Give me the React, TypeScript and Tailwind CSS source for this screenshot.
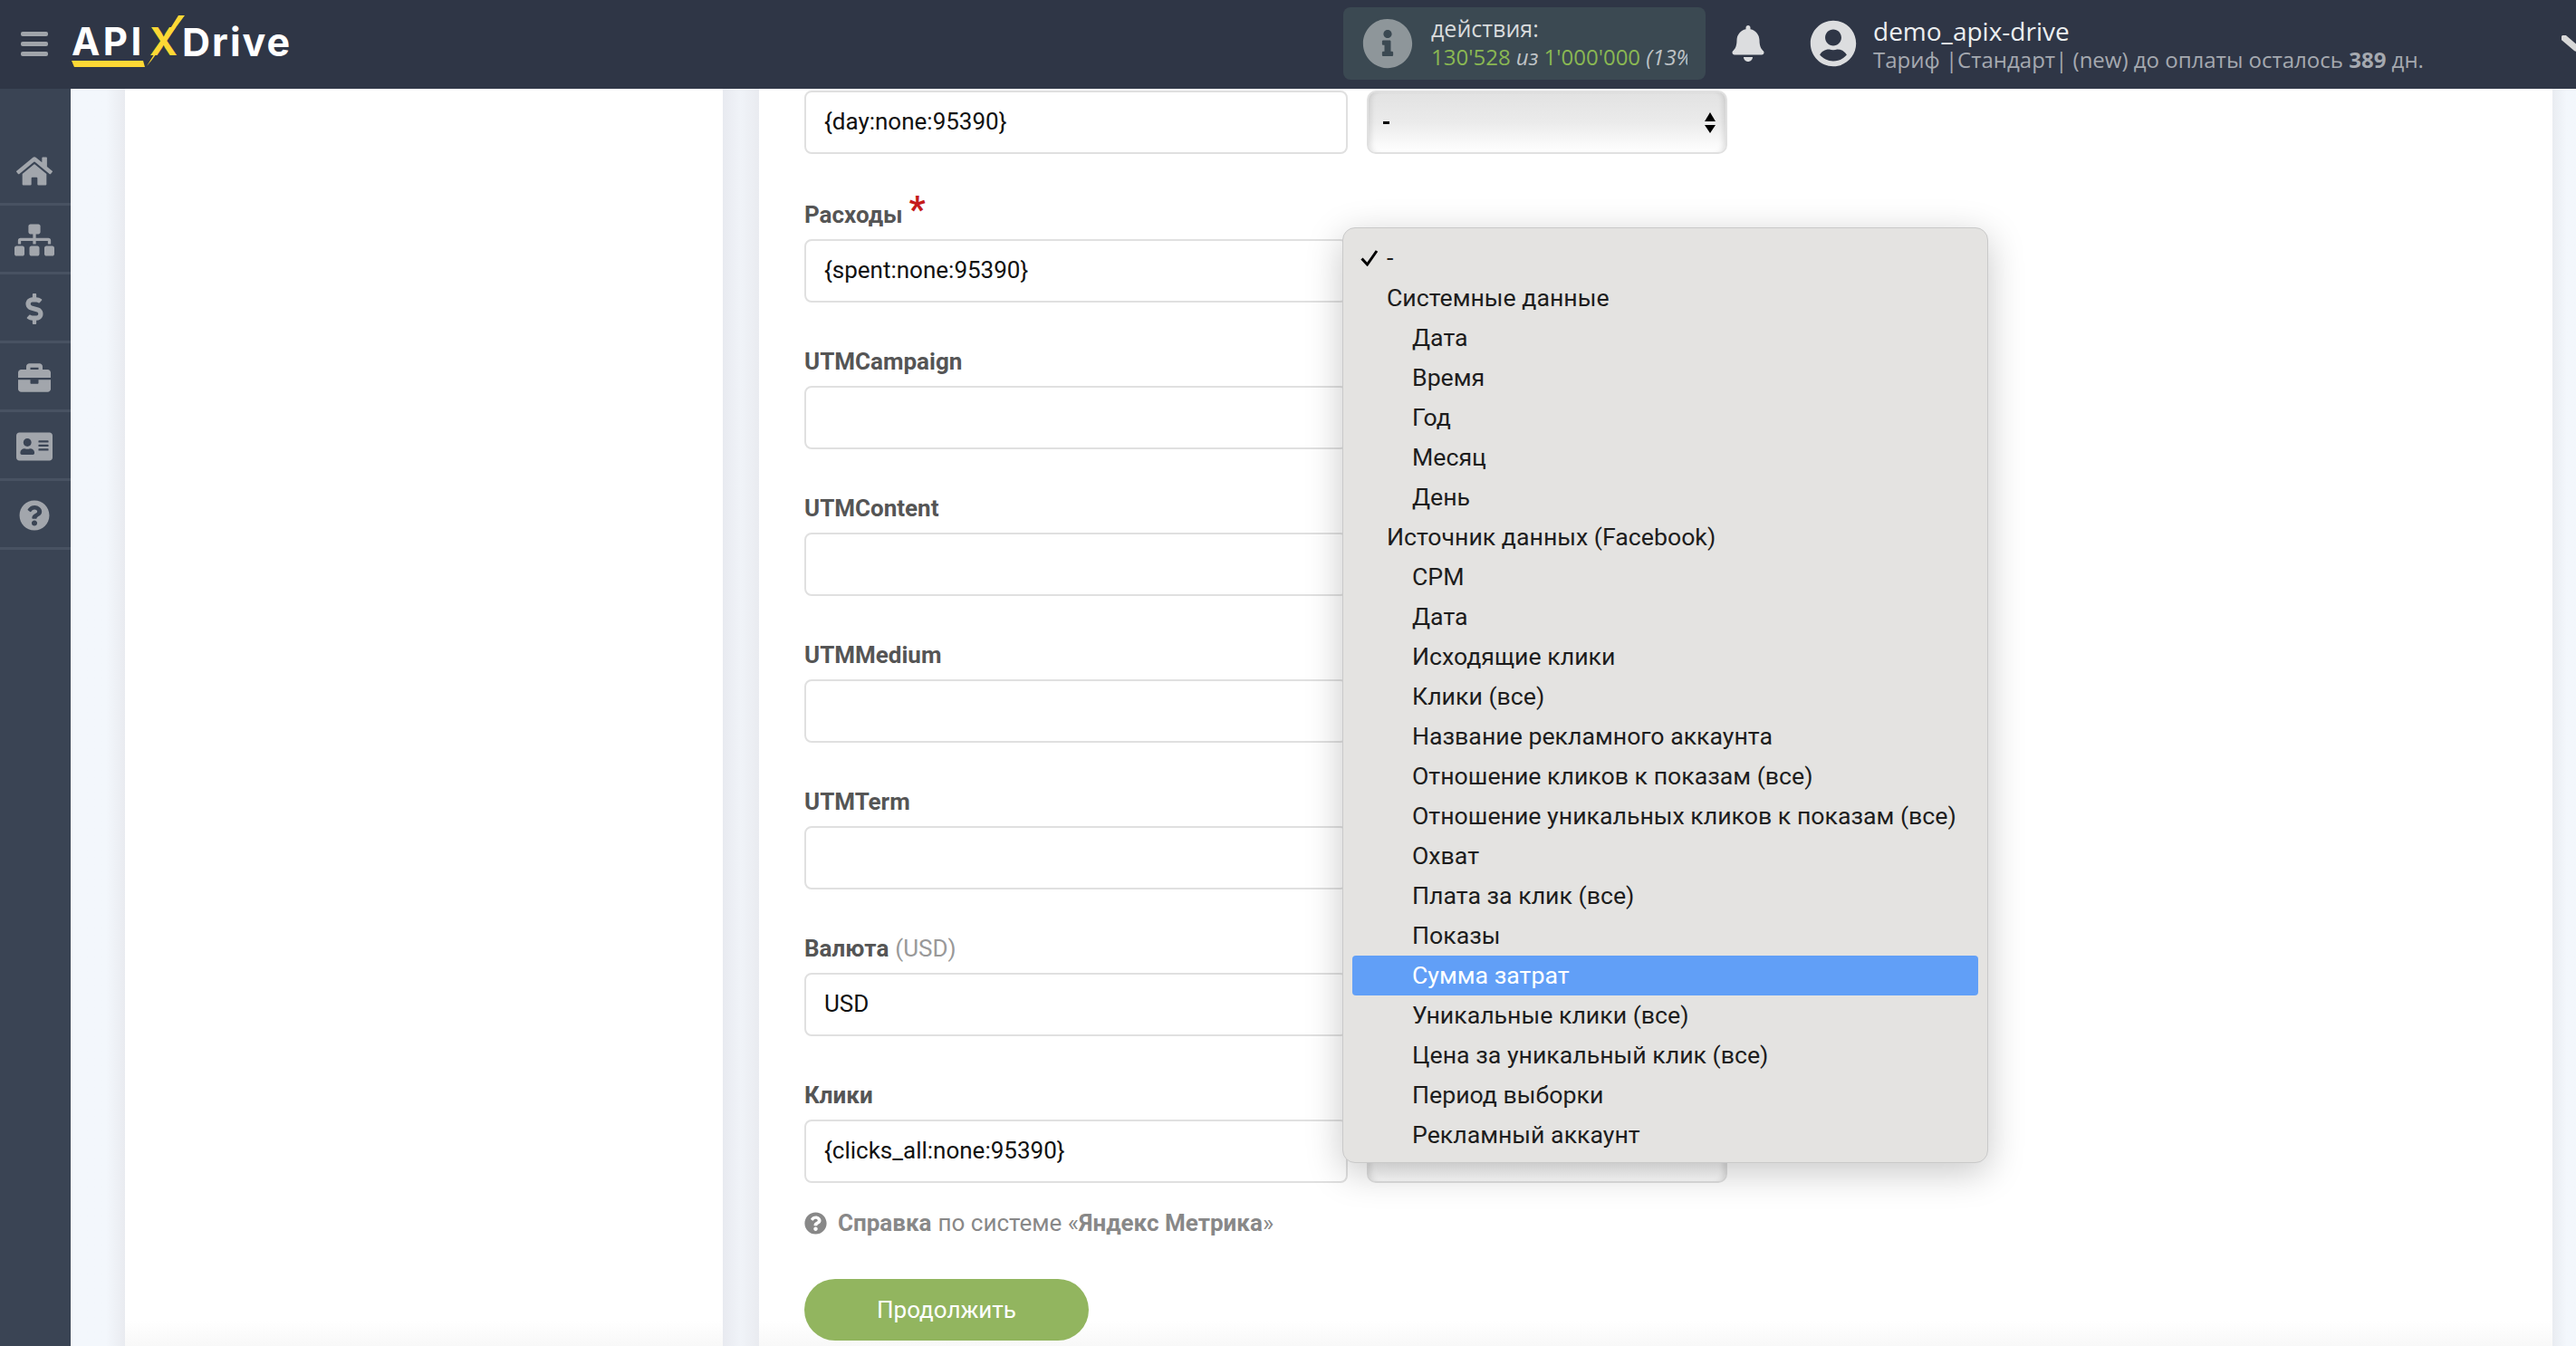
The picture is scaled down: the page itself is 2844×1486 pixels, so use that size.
import React from "react";
import {
  FaAddressCard,
  FaBell,
  FaBriefcase,
  FaDollarSign,
  FaHome,
  FaInfoCircle,
  FaQuestionCircle,
  FaSitemap,
  FaUserCircle,
} from "react-icons/fa";

const navIcons = [
  { Icon: FaHome, size: 40 },
  { Icon: FaSitemap, size: 44 },
  { Icon: FaDollarSign, size: 34 },
  { Icon: FaBriefcase, size: 36 },
  { Icon: FaAddressCard, size: 40 },
  { Icon: FaQuestionCircle, size: 34 },
];

const rows = [
  { label: "UTMCampaign", value: "" },
  { label: "UTMContent", value: "" },
  { label: "UTMMedium", value: "" },
  { label: "UTMTerm", value: "" },
  { label: "Валюта", hint: "(USD)", value: "USD" },
  { label: "Клики", value: "{clicks_all:none:95390}" },
];

const menuItems = [
  { text: "Системные данные", level: 0 },
  { text: "Дата", level: 1 },
  { text: "Время", level: 1 },
  { text: "Год", level: 1 },
  { text: "Месяц", level: 1 },
  { text: "День", level: 1 },
  { text: "Источник данных (Facebook)", level: 0 },
  { text: "CPM", level: 1 },
  { text: "Дата", level: 1 },
  { text: "Исходящие клики", level: 1 },
  { text: "Клики (все)", level: 1 },
  { text: "Название рекламного аккаунта", level: 1 },
  { text: "Отношение кликов к показам (все)", level: 1 },
  { text: "Отношение уникальных кликов к показам (все)", level: 1 },
  { text: "Охват", level: 1 },
  { text: "Плата за клик (все)", level: 1 },
  { text: "Показы", level: 1 },
  { text: "Сумма затрат", level: 1, active: true },
  { text: "Уникальные клики (все)", level: 1 },
  { text: "Цена за уникальный клик (все)", level: 1 },
  { text: "Период выборки", level: 1 },
  { text: "Рекламный аккаунт", level: 1 },
];

// logo: letters stay real text, only the underline and the long stroke of the X are drawn
const Logo = () => (
  <div className="relative mb-[4px] ml-[26px] h-[58px] w-[244px] shrink-0 font-['Inter',sans-serif] text-white">
    <span className="absolute left-0 top-[7px] text-[42px] font-bold leading-[44px] tracking-[3.5px]">API</span>
    <span className="absolute left-[122px] top-[7px] text-[43px] font-bold leading-[44px] tracking-[2px]">Drive</span>
    <span className="absolute left-[86px] top-[7px] text-[42px] font-bold leading-[44px] text-[#fdd835]">X</span>
    <svg className="absolute left-0 top-0" width="244" height="58" viewBox="0 0 244 58">
      <path d="M0 50h79l2 7H3z" fill="#fdd835" />
      <path d="M118 0h7L88 50l-5 6z" fill="#fdd835" />
    </svg>
  </div>
);

const Field = ({ value }: { value: string }) => (
  <div className="flex gap-[21px]">
    <input
      readOnly
      value={value}
      className="h-[70px] w-[600px] rounded-[8px] border-2 border-[#e0e0e0] bg-white px-[20px] pb-[2px] text-[26px] text-[#111] outline-none"
    />
    <div className="flex h-[70px] w-[398px] items-center justify-between rounded-[10px] border-2 border-[#e0e0e0] bg-gradient-to-b from-[#e2e2e2] via-[#ebebeb] to-white pl-[16px] pr-[11px] shadow-[inset_6px_0_6px_-4px_rgba(0,0,0,0.12),inset_-6px_0_6px_-4px_rgba(0,0,0,0.12)]">
      <span className="h-[3px] w-[7px] bg-black" />
      <span className="flex flex-col gap-[4px]">
        <span className="h-0 w-0 border-x-[6px] border-b-[10px] border-x-transparent border-b-black" />
        <span className="h-0 w-0 border-x-[6px] border-t-[9px] border-x-transparent border-t-black" />
      </span>
    </div>
  </div>
);

const App = () => {
  return (
    <div className="flex h-[1486px] w-[2844px] flex-col overflow-hidden bg-white font-['Roboto',sans-serif]">
      <header className="flex h-[98px] shrink-0 items-center bg-[#2f3646] pb-[2px]">
        <div className="ml-[23px] flex w-[30px] shrink-0 flex-col gap-[6px]">
          <span className="h-[5px] rounded-[2px] bg-[#a0a4aa]" />
          <span className="h-[5px] rounded-[2px] bg-[#a0a4aa]" />
          <span className="h-[5px] rounded-[2px] bg-[#a0a4aa]" />
        </div>
        <Logo />

        <div className="ml-[1160px] flex h-[80px] w-[400px] shrink-0 items-center rounded-[8px] bg-[#3b4952] pl-[21px]">
          <FaInfoCircle size={56} className="shrink-0 text-[#8e969a]" />
          <div className="mb-[3px] ml-[20px] w-[283px] overflow-hidden whitespace-nowrap font-['Open_Sans',sans-serif]">
            <div className="text-[25px] leading-[32px] text-[#d9dbdd]">действия:</div>
            <div className="mt-[1px] text-[24px] leading-[30px] text-[#8ab852]">
              130'528 <i className="text-[#bfc3c6]">из</i> 1'000'000 <i className="text-[#bfc3c6]">(13%)</i>
            </div>
          </div>
        </div>

        <FaBell size={40} className="ml-[27px] shrink-0 text-[#dcdddf]" />
        <FaUserCircle size={52} className="ml-[48px] shrink-0 text-[#dcdddf]" />
        <div className="ml-[18px] whitespace-nowrap font-['Open_Sans',sans-serif]">
          <div className="text-[28px] leading-[34px] text-[#eceef0]">demo_apix-drive</div>
          <div className="text-[24px] leading-[29px] text-[#a5a9b0]">
            Тариф |Стандарт| (new) до оплаты осталось <b>389</b> дн.
          </div>
        </div>
        <svg className="ml-auto mr-[-16px] shrink-0" width="32" height="18" viewBox="0 0 32 18">
          <path d="M3 3 16 14 29 3" fill="none" stroke="#d8d8d8" strokeWidth="7" strokeLinecap="round" strokeLinejoin="round" />
        </svg>
      </header>

      <div className="relative flex min-h-0 flex-1">
        <nav className="w-[78px] shrink-0 bg-[#3a4454] pt-[53px]">
          {navIcons.map(({ Icon, size }, i) => (
            <div
              key={i}
              className="flex h-[76px] items-center justify-center border-b-[3px] border-[#485262] pr-[3px] pt-[3px] text-[#a2a6ac]"
            >
              <Icon size={size} />
            </div>
          ))}
        </nav>

        <div className="w-[60px] shrink-0 bg-gradient-to-r from-[#f3f7fc] from-65% to-[#e9ebf0]" />
        <div className="w-[660px] shrink-0 bg-gradient-to-b from-white from-[98%] to-[#f8f8f8]" />
        <div className="w-[40px] shrink-0 bg-gradient-to-r from-[#e8eaf0] via-[#f0f3f8] to-[#e9ebf0]" />

        <main className="flex w-[1980px] shrink-0 flex-col bg-gradient-to-b from-white from-[98%] to-[#f8f8f8] pl-[50px] pt-[2px]">
          <Field value="{day:none:95390}" />

          <div className="mt-[47px] flex h-[40px] items-center text-[26px] font-bold text-[#555]">
            Расходы
            <span className="mb-[10px] ml-[7px] text-[40px] font-bold leading-none text-[#c51b1b]">*</span>
          </div>
          <div className="mt-[7px]">
            <Field value="{spent:none:95390}" />
          </div>

          {rows.map((row) => (
            <div key={row.label} className="mt-[45px]">
              <div className="mb-[7px] flex h-[40px] items-center text-[26px] font-bold text-[#555]">
                {row.label}
                {row.hint && <span className="ml-[7px] font-normal text-[#999]">{row.hint}</span>}
              </div>
              <Field value={row.value} />
            </div>
          ))}

          <div className="mt-[27px] flex h-[34px] items-center text-[26px] text-[#888]">
            <FaQuestionCircle size={25} className="mr-[12px]" />
            <b>Справка</b>
            <span className="ml-[7px]">
              по системе «<b>Яндекс Метрика</b>»
            </span>
          </div>

          <button className="mt-[45px] h-[68px] w-[314px] rounded-[34px] bg-[#92b55f] text-[26px] text-white">
            Продолжить
          </button>
        </main>

        <div className="flex-1 bg-gradient-to-r from-[#e9ecf1] to-[#f3f7fc] to-60%" />

        {/* open native select list, sits over the form */}
        <div className="absolute left-[1482px] top-[153px] h-[1033px] w-[713px] rounded-[14px] border border-[#c9c9c9] bg-[#e4e3e1] px-[10px] pt-[11px] text-[26.7px] text-[#1d1d1d] shadow-[0_10px_40px_rgba(0,0,0,0.22)]">
          <div className="flex h-[44px] items-center pl-[9px]">
            <svg className="mr-[9px] shrink-0" width="20" height="18" viewBox="0 0 20 18">
              <path d="M1.5 9.5 7.5 16 18 1" fill="none" stroke="#000" strokeWidth="3" />
            </svg>
            <span>-</span>
          </div>
          {menuItems.map((item, i) => (
            <div
              key={i}
              className={`flex h-[44px] items-center rounded-[4px] ${item.level ? "pl-[66px]" : "pl-[38px]"} ${
                item.active ? "bg-[#619ff7] text-white" : ""
              }`}
            >
              {item.text}
            </div>
          ))}
        </div>
      </div>
    </div>
  );
};

export default App;
